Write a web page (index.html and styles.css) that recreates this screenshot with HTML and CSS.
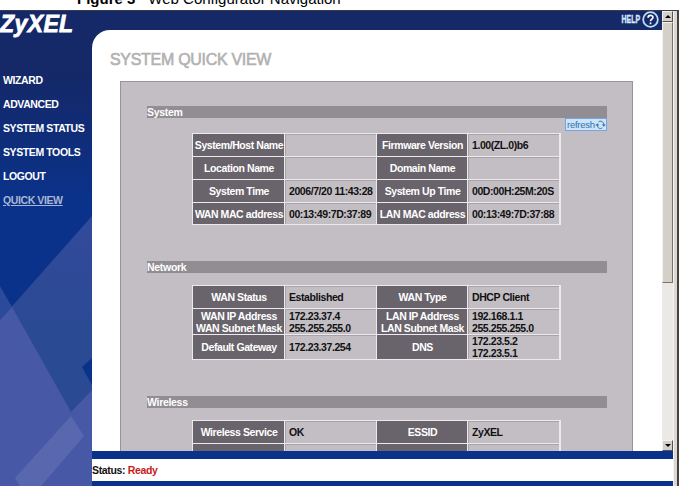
FILE: index.html
```html
<!DOCTYPE html>
<html lang="en">
<head>
  <meta charset="UTF-8">
  <title>Web Configurator Navigation</title>
  <link rel="stylesheet" href="styles.css">
</head>
<body>
  <div class="caption"><b>Figure 3</b><span>Web Configurator Navigation</span></div>
  <div class="window">
    <div class="sidebar">
      <svg class="backdrop" width="92" height="475" viewBox="0 0 92 475">
        <defs>
          <linearGradient id="beam" x1="0" y1="0" x2="0" y2="1">
            <stop offset="0" stop-color="#324a9b"/>
            <stop offset="0.4" stop-color="#2b4a94"/>
          </linearGradient>
        </defs>
        <polygon points="92,205 0,309 0,475 92,475" fill="url(#beam)"/>
        <polygon points="0,275 12,296 0,309" fill="#2b4a9a"/>
        <polygon points="12,296 0,309 0,475 92,475 92,379 71,401" fill="#4759a6"/>
        <polygon points="92,347 82,356 92,374" fill="#0a328a"/>
        <polygon points="71,405 84,425 41,475 20,475 15,467" fill="#5968ae"/>
      </svg>
      <div class="logo">ZyXEL</div>
      <ul class="menu">
        <li>WIZARD</li>
        <li>ADVANCED</li>
        <li>SYSTEM STATUS</li>
        <li>SYSTEM TOOLS</li>
        <li>LOGOUT</li>
        <li class="active">QUICK VIEW</li>
      </ul>
    </div>
    <div class="main">
      <div class="view">
        <div class="content">
          <div class="header">
            <span class="help">HELP</span>
            <svg width="17" height="17" viewBox="0 0 16 16">
              <circle cx="8" cy="8" r="6.9" fill="none" stroke="#b9dcfa" stroke-width="1.7"/>
              <path d="M5.7 6.3C5.7 3.3 10.4 3.4 10.3 6.1C10.3 7.7 8 7.7 8 9.6M8 10.8V12.4" fill="none" stroke="#fff" stroke-width="1.6"/>
            </svg>
          </div>
          <div class="page">
            <h1>SYSTEM QUICK VIEW</h1>
            <div class="panel">
              <div class="section">
                <h2>System</h2>
                <div class="refresh">
                  <span>refresh</span>
                  <svg width="11" height="10" viewBox="0 0 11 10" fill="none" stroke="#2f74ad" stroke-width="1">
                    <path d="M3.5 1.9C5.5 .3 8.7 1.4 8.8 4.9M7.3 7.9C5 9.4 2.3 8.2 2.3 4.6"/>
                    <path d="M6.8 4.6H10.8L8.8 6.8ZM.3 5.4L2.3 3.2L4.3 5.4Z" fill="#2f74ad" stroke="none"/>
                  </svg>
                </div>
                <div class="grid system">
                  <div class="label">System/Host Name</div><div class="value"></div>
                  <div class="label">Firmware Version</div><div class="value">1.00(ZL.0)b6</div>
                  <div class="label">Location Name</div><div class="value"></div>
                  <div class="label">Domain Name</div><div class="value"></div>
                  <div class="label">System Time</div><div class="value">2006/7/20 11:43:28</div>
                  <div class="label">System Up Time</div><div class="value">00D:00H:25M:20S</div>
                  <div class="label">WAN MAC address</div><div class="value">00:13:49:7D:37:89</div>
                  <div class="label">LAN MAC address</div><div class="value">00:13:49:7D:37:88</div>
                </div>
              </div>
              <div class="section">
                <h2>Network</h2>
                <div class="grid network">
                  <div class="label">WAN Status</div><div class="value">Established</div>
                  <div class="label">WAN Type</div><div class="value">DHCP Client</div>
                  <div class="label">WAN IP Address<br>WAN Subnet Mask</div><div class="value">172.23.37.4<br>255.255.255.0</div>
                  <div class="label">LAN IP Address<br>LAN Subnet Mask</div><div class="value">192.168.1.1<br>255.255.255.0</div>
                  <div class="label">Default Gateway</div><div class="value">172.23.37.254</div>
                  <div class="label">DNS</div><div class="value">172.23.5.2<br>172.23.5.1</div>
                </div>
              </div>
              <div class="section">
                <h2>Wireless</h2>
                <div class="grid wireless">
                  <div class="label">Wireless Service</div><div class="value">OK</div>
                  <div class="label">ESSID</div><div class="value">ZyXEL</div>
                  <div class="label">Wireless Channel</div><div class="value">1</div>
                  <div class="label">Security</div><div class="value">Disable</div>
                </div>
              </div>
            </div>
          </div>
        </div>
        <div class="scrollbar">
          <div class="arrow"><svg width="6" height="3"><path d="M0 3L3 0L6 3Z"/></svg></div>
          <div class="thumb"></div>
          <div class="track"></div>
          <div class="arrow"><svg width="6" height="3"><path d="M0 0H6L3 3Z"/></svg></div>
        </div>
      </div>
      <div class="status">Status: <span>Ready</span></div>
    </div>
    <div class="edge"></div>
  </div>
</body>
</html>
```
FILE: styles.css
```css
* {
  box-sizing: border-box;
  margin: 0;
  padding: 0;
}
body {
  font-family: "Liberation Sans", Arial, sans-serif;
  background: #fff;
  width: 681px;
  height: 486px;
  overflow: hidden;
}
svg {
  display: block;
  flex: none;
}
.caption {
  display: flex;
  gap: 13px;
  height: 10px;
  overflow: hidden;
  padding-left: 77px;
  font-size: 15px;
  line-height: 16px;
  white-space: nowrap;
}
.caption b, .caption span {
  margin-top: -9px;
}
.window {
  display: flex;
  width: 679px;
  height: 476px;
  border-top: 1px solid #3c3c48;
}
.sidebar {
  position: relative;
  width: 92px;
  background: linear-gradient(#152867 0, #152867 60px, #0a328a 190px);
  color: #fff;
}
.backdrop {
  position: absolute;
  left: 0;
  top: 0;
}
.logo {
  position: relative;
  height: 57px;
  padding-top: 1px;
  font: italic bold 23px/25px "Liberation Sans", Arial, sans-serif;
  letter-spacing: 0.4px;
  white-space: nowrap;
  -webkit-text-stroke: 0.8px #fff;
}
.menu {
  position: relative;
  list-style: none;
  padding-left: 3px;
  font-size: 10.5px;
  font-weight: bold;
  letter-spacing: -0.4px;
  line-height: 24px;
  white-space: nowrap;
}
.menu .active {
  color: #a9b6d2;
  text-decoration: underline;
}
.main {
  display: flex;
  flex-direction: column;
  width: 581px;
}
.view {
  display: flex;
  height: 440px;
}
.content {
  width: 570px;
  overflow: hidden;
  background: #152867;
}
.header {
  display: flex;
  justify-content: flex-end;
  gap: 2px;
  height: 19px;
  padding-right: 3px;
}
.help {
  color: #d6e6fc;
  font-size: 10.5px;
  font-weight: bold;
  line-height: 17px;
  transform: scaleX(0.66);
  transform-origin: right;
  -webkit-text-stroke: 0.4px #d6e6fc;
}
.page {
  height: 421px;
  overflow: hidden;
  padding: 20px 29px 0 28px;
  background: #fff;
  border-top-left-radius: 18px;
}
h1 {
  height: 31px;
  margin-left: -10px;
  color: #b3b1b3;
  font-size: 16px;
  font-weight: normal;
  letter-spacing: -0.3px;
  line-height: 20px;
  white-space: nowrap;
  -webkit-text-stroke: 0.6px #b3b1b3;
}
.panel {
  height: 500px;
  padding: 24px 25px 0 26px;
  border: 1px solid #98959a;
  background: #c2bec3;
}
.section {
  height: 155px;
}
.section:nth-child(2) {
  height: 135px;
}
h2 {
  height: 12px;
  background: #918d92;
  color: #fff;
  font-size: 10.5px;
  letter-spacing: -0.3px;
  line-height: 13px;
}
.refresh {
  display: flex;
  align-items: center;
  justify-content: space-between;
  width: 42px;
  height: 13px;
  margin: 0 0 -13px auto;
  padding-left: 1px;
  border: 1px solid #76a5e4;
  background: #cfe3f6;
  color: #2f74ad;
  font-size: 9.5px;
  letter-spacing: -0.25px;
  line-height: 11px;
}
.grid {
  display: grid;
  grid-template-columns: 91px 91px 90px 91px;
  gap: 1px;
  width: 368px;
  margin: 12px 0 0 45px;
  border: 1px solid #ebe9ec;
  border-right: 0;
  box-shadow: 1px 0 #ebe9ec;
  background: #ebe9ec;
  font-size: 10.5px;
  font-weight: bold;
  letter-spacing: -0.42px;
  line-height: 12px;
  white-space: nowrap;
}
.grid.system {
  margin-top: 15px;
  grid-template-rows: 22px 22px 22px 21px;
}
.network {
  grid-template-rows: 22px 25px 24px;
}
.wireless {
  grid-template-rows: 22px 22px;
}
.label, .value {
  display: flex;
  align-items: center;
}
.label {
  justify-content: center;
  padding-left: 1px;
  background: #69646b;
  color: #fff;
  text-align: center;
}
.value {
  padding-left: 4px;
  background: #c2bec3;
  box-shadow: inset 1px 1px #a7a3a8;
  color: #111;
}
.scrollbar {
  display: flex;
  flex-direction: column;
  width: 11px;
  background: #ebe9e6;
}
.arrow {
  display: flex;
  align-items: center;
  justify-content: center;
  height: 11px;
  border: 1px solid;
  border-color: #f4f2ee #55534f #55534f #f4f2ee;
  background: #d4d0c8;
}
.thumb {
  height: 261px;
  border: 1px solid;
  border-color: #f4f2ee #77746f #77746f #f4f2ee;
  background: #d4d0c8;
}
.track {
  flex: 1;
}
.status {
  height: 35px;
  border-top: 8px solid #0a328a;
  border-bottom: 5px solid #0a328a;
  background: #fff;
  color: #111;
  font-size: 10.5px;
  font-weight: bold;
  letter-spacing: -0.35px;
  line-height: 23px;
}
.status span {
  color: #c71a20;
}
.edge {
  width: 6px;
  border-left: 1px solid #f6f4f1;
  border-right: 2px solid #44423f;
  background: #dcd8d1;
}
```
